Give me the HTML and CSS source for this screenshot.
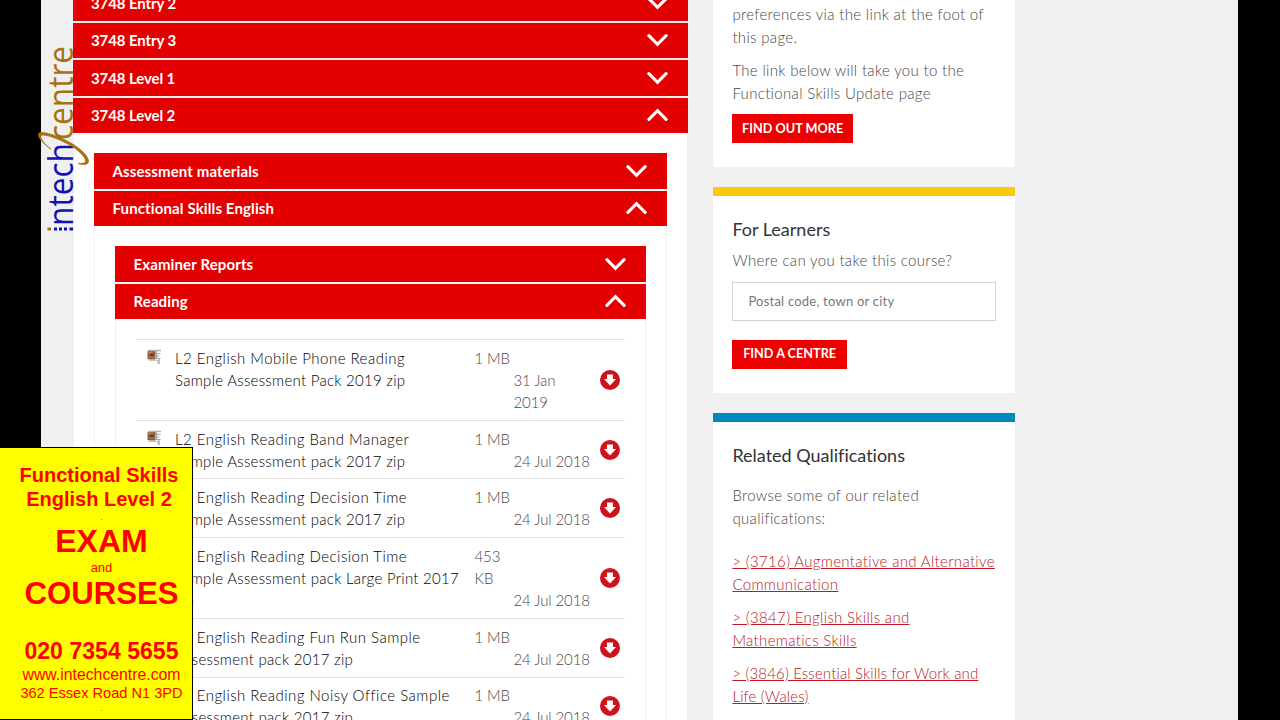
FILE: index.html
```html
<!DOCTYPE html>
<html lang="en">
<head>
    <meta charset="UTF-8">
    <meta name="viewport" content="width=device-width, initial-scale=1.0">
    <title>Functional Skills English Level 2</title>
    <link rel="stylesheet" href="styles.css">
</head>
<body>

    <!-- shared icons -->
    <svg class="icons">
        <symbol id="chevron" viewBox="0 0 22 14">
            <path d="M2 2.5 L11 11.5 L20 2.5" fill="none" stroke="#fff" stroke-width="3.3" stroke-linecap="round" stroke-linejoin="miter"/>
        </symbol>
        <symbol id="download" viewBox="0 0 20 20">
            <circle cx="10" cy="10" r="10" fill="#ce1219"/>
            <path d="M7 4.5 H13 V9 H16 L10 15.5 L4 9 H7 Z" fill="#fff"/>
        </symbol>
        <symbol id="zip" viewBox="0 0 15 16">
            <path d="M1 1.5 H14 M2 11 H9" fill="none" stroke="#b9b5b0" stroke-width="1.4"/>
            <rect x="0.5" y="2.2" width="8" height="8" fill="#8a5738"/>
            <rect x="1" y="3" width="5" height="2" fill="#b77d50"/>
            <rect x="3.5" y="4.5" width="2.5" height="3" fill="#5d3626"/>
            <rect x="1" y="7.5" width="7" height="1.2" fill="#b77d50"/>
            <path d="M9.5 2 V10 M10 4.5 H13.5 M10 7 H12.5 M10 9.5 H13.5 M9.5 11.8 H12.5 M10.5 14 H13 M12 10 V15" fill="none" stroke="#aaa6a2" stroke-width="1.2"/>
        </symbol>
    </svg>

    <div class="page">
        <main class="documents">
            <div class="bar"><span>3748 Entry 2</span><svg class="chevron"><use href="#chevron"/></svg></div>
            <div class="bar"><span>3748 Entry 3</span><svg class="chevron"><use href="#chevron"/></svg></div>
            <div class="bar"><span>3748 Level 1</span><svg class="chevron"><use href="#chevron"/></svg></div>
            <div class="bar"><span>3748 Level 2</span><svg class="chevron up"><use href="#chevron"/></svg></div>
            <div class="panel">
                <div class="bar"><span>Assessment materials</span><svg class="chevron"><use href="#chevron"/></svg></div>
                <div class="bar"><span>Functional Skills English</span><svg class="chevron up"><use href="#chevron"/></svg></div>
                <div class="panel">
                    <div class="bar"><span>Examiner Reports</span><svg class="chevron"><use href="#chevron"/></svg></div>
                    <div class="bar"><span>Reading</span><svg class="chevron up"><use href="#chevron"/></svg></div>
                    <div class="panel">
                        <ul class="files">
                            <li>
                                <svg class="zip"><use href="#zip"/></svg>
                                <div class="name">L2 English Mobile Phone Reading<br>Sample Assessment Pack 2019 zip</div>
                                <div class="info"><p>1 MB</p><p class="date">31 Jan<br>2019</p></div>
                                <svg class="download"><use href="#download"/></svg>
                            </li>
                            <li>
                                <svg class="zip"><use href="#zip"/></svg>
                                <div class="name">L2 English Reading Band Manager<br>Sample Assessment pack 2017 zip</div>
                                <div class="info"><p>1 MB</p><p class="date">24 Jul 2018</p></div>
                                <svg class="download"><use href="#download"/></svg>
                            </li>
                            <li>
                                <svg class="zip"><use href="#zip"/></svg>
                                <div class="name">L2 English Reading Decision Time<br>Sample Assessment pack 2017 zip</div>
                                <div class="info"><p>1 MB</p><p class="date">24 Jul 2018</p></div>
                                <svg class="download"><use href="#download"/></svg>
                            </li>
                            <li>
                                <svg class="zip"><use href="#zip"/></svg>
                                <div class="name">L2 English Reading Decision Time<br>Sample Assessment pack Large Print 2017<br>zip</div>
                                <div class="info"><p>453<br>KB</p><p class="date">24 Jul 2018</p></div>
                                <svg class="download"><use href="#download"/></svg>
                            </li>
                            <li>
                                <svg class="zip"><use href="#zip"/></svg>
                                <div class="name">L2 English Reading Fun Run Sample<br>Assessment pack 2017 zip</div>
                                <div class="info"><p>1 MB</p><p class="date">24 Jul 2018</p></div>
                                <svg class="download"><use href="#download"/></svg>
                            </li>
                            <li>
                                <svg class="zip"><use href="#zip"/></svg>
                                <div class="name">L2 English Reading Noisy Office Sample<br>Assessment pack 2017 zip</div>
                                <div class="info"><p>1 MB</p><p class="date">24 Jul 2018</p></div>
                                <svg class="download"><use href="#download"/></svg>
                            </li>
                        </ul>
                    </div>
                </div>
            </div>
        </main>

        <aside class="sidebar">
            <section class="card update">
                <p>preferences via the link at the foot of<br>this page.</p>
                <p>The link below will take you to the<br>Functional Skills Update page</p>
                <button>FIND OUT MORE</button>
            </section>
            <section class="card learners">
                <h2>For Learners</h2>
                <p>Where can you take this course?</p>
                <input type="text" placeholder="Postal code, town or city">
                <button class="centre">FIND A CENTRE</button>
            </section>
            <section class="card related">
                <h2>Related Qualifications</h2>
                <p>Browse some of our related<br>qualifications:</p>
                <a href="#">&gt; (3716) Augmentative and Alternative<br>Communication</a>
                <a href="#">&gt; (3847) English Skills and<br>Mathematics Skills</a>
                <a href="#">&gt; (3846) Essential Skills for Work and<br>Life (Wales)</a>
            </section>
        </aside>
    </div>

    <!-- vertical logo over the page edge -->
    <svg class="logo" viewBox="0 0 60 200">
        <g transform="translate(39 186) rotate(-90)">
            <text class="logo-text" x="0" y="0" textLength="83" lengthAdjust="spacingAndGlyphs" fill="#1212b0">ntech</text>
            <text class="logo-text" x="86" y="0" textLength="94" lengthAdjust="spacingAndGlyphs" fill="#a8700f">centre</text>
        </g>
        <!-- dotted i -->
        <rect x="13.5" y="187.5" width="3.5" height="3" fill="#a8700f"/>
        <path d="M20 189 H23 M25 189 H28 M30 189 H33 M35.5 189 H39" stroke="#1212b0" stroke-width="3"/>
        <!-- swoosh -->
        <path d="M17 109 C8 103 4 97 4.5 94 C6 90.500 19 94 31 100 C44 106 54 115 54.5 121 C54.5 125 50 125 44 123.5 C50 123.5 52 123 51.5 120 C50 115 41 107 30 102 C19 96.5 8 93.5 6.5 96 C6.5 99 11 105 17 109 Z" fill="#a8700f" stroke="#a8700f" stroke-width="0.8"/>
    </svg>

    <div class="advert">
        <p class="title">Functional Skills<br>English Level 2</p>
        <p class="dot">.</p>
        <p class="big">EXAM</p>
        <p class="and">and</p>
        <p class="big courses">COURSES</p>
        <p class="phone">020 7354 5655</p>
        <p class="web">www.intechcentre.com</p>
        <p class="address">362 Essex Road N1 3PD</p>
        <p class="dot">.</p>
    </div>

</body>
</html>
```
FILE: styles.css
```css
* {
    box-sizing: border-box;
}

body {
    margin: 0;
    height: 720px;
    overflow: hidden;
    background-color: #000;
    font-family: Lato, "Open Sans", sans-serif;
    font-size: 15px;
    color: #484848;
}

p, h2, ul {
    margin: 0;
    padding: 0;
}

.icons {
    display: none;
}

.page {
    display: flex;
    align-items: flex-start;
    gap: 25px;
    width: 1197px;
    height: 720px;
    margin-left: 41px;
    padding-left: 32px;
    background-color: #f0f0f0;
    overflow: hidden;
}

/* accordion */
.documents {
    width: 615.4px;
    flex: none;
    margin-top: -15px;
}

.bar {
    display: flex;
    justify-content: space-between;
    align-items: center;
    height: 35.5px;
    margin-bottom: 2px;
    padding: 0 20px 0 18px;
    background-color: #e30000;
    color: #fff;
    font-weight: bold;
    letter-spacing: -0.1px;
}

.panel .bar {
    padding-left: 18.5px;
    letter-spacing: 0.12px;
}

.chevron {
    width: 21px;
    height: 14px;
}

.chevron.up {
    transform: scaleY(-1);
}

.panel {
    margin-top: -2px;
    padding: 20px 20px 0;
    background-color: #fff;
    border: 1px solid #f0f0f0;
    border-top: none;
}

/* file list */
.files {
    list-style: none;
    height: 460px;
    border-top: 1px solid #e2e2e2;
    line-height: 22.1px;
    font-weight: 300;
}

.files li {
    display: flex;
    padding: 6.8px 5px 6.7px 11px;
    border-bottom: 1px solid #e2e2e2;
}

.zip {
    width: 15px;
    height: 16px;
    margin-top: 2px;
    flex: none;
}

.name {
    width: 312.5px;
    padding-left: 13px;
    flex: none;
    color: #000;
    white-space: nowrap;
    letter-spacing: 0.28px;
}

.name::first-line {
    letter-spacing: 0.48px;
}

.info {
    flex: 1;
    white-space: nowrap;
    letter-spacing: -0.1px;
}

.date {
    padding-left: 39px;
}

.download {
    width: 20px;
    height: 20px;
    align-self: center;
    flex: none;
}

/* right column */
.sidebar {
    width: 302px;
    flex: none;
}

.card {
    margin-bottom: 19.5px;
    padding: 0 19px;
    background-color: #fff;
    line-height: 23px;
    white-space: nowrap;
    font-weight: 300;
    letter-spacing: 0.33px;
}

.card h2 {
    font-size: 18px;
    font-weight: 400;
    line-height: 24px;
    letter-spacing: 0;
    font-variant-ligatures: none;
    color: #333;
}

.update {
    height: 167px;
    padding-top: 3px;
}

.update p {
    margin-bottom: 9.5px;
}

.learners {
    height: 206.5px;
    padding-top: 21px;
    border-top: 9.5px solid #f9cb0a;
}

.learners p {
    margin-top: 8px;
}

.related {
    height: 330px;
    padding-top: 21px;
    border-top: 9.5px solid #0088c0;
}

.related p {
    margin: 17.5px 0 19.5px;
}

.card a {
    display: block;
    margin-bottom: 10px;
    color: #bd1728;
}

.related a:nth-of-type(3) {
    letter-spacing: 0.15px;
}

button {
    display: block;
    width: 120.5px;
    height: 29px;
    padding: 0 0 2px;
    border: none;
    background-color: #ec0000;
    color: #fff;
    font: bold 12.7px Lato, sans-serif;
}

button.centre {
    width: 114.5px;
    margin-top: 19px;
}

input {
    display: block;
    width: 264px;
    height: 39px;
    margin-top: 10px;
    padding: 0 15px 1px;
    border: 1px solid #d4d4d4;
    font: 13px Lato, sans-serif;
    letter-spacing: 0.22px;
}

input::placeholder {
    color: #777;
}

.logo {
    position: absolute;
    left: 34px;
    top: 40px;
    width: 60px;
    height: 200px;
}

.logo-text {
    font: 34px "Open Sans", sans-serif;
}

/* yellow advert in the corner */
.advert {
    position: absolute;
    left: 0;
    top: 447px;
    width: 193px;
    height: 273px;
    padding: 15px 0 0 11px;
    border: 1px solid #000;
    border-left: none;
    background-color: #ff0;
    color: #f00;
    font-family: "Liberation Sans", Arial, sans-serif;
    text-align: center;
    white-space: nowrap;
}

.title {
    margin-left: -5px;
    font-size: 20px;
    font-weight: bold;
    line-height: 24px;
}

.dot {
    font-size: 8px;
    line-height: 13px;
}

.big {
    font-size: 32px;
    font-weight: bold;
    line-height: 34px;
}

.courses {
    font-size: 31.2px;
}

.and {
    font-size: 13px;
    line-height: 19px;
}

.phone {
    margin-top: 26px;
    font-size: 23.1px;
    font-weight: bold;
    line-height: 28px;
}

.web {
    font-size: 15.8px;
    line-height: 20px;
}

.address {
    font-size: 14.6px;
    line-height: 17px;
}
```
